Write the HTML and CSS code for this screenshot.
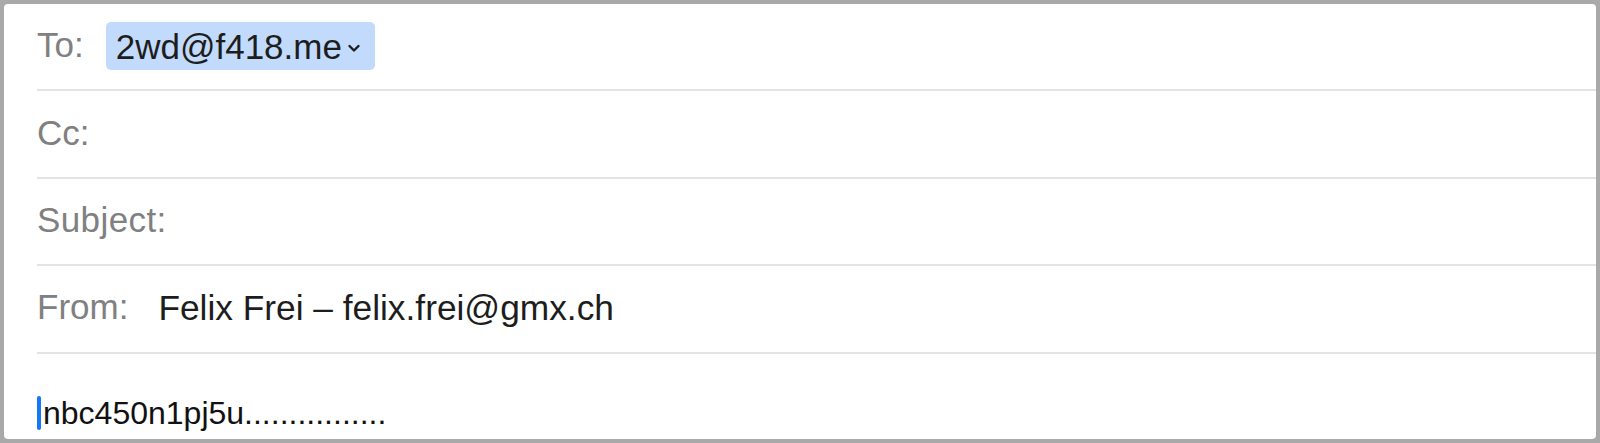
FILE: index.html
```html
<!DOCTYPE html>
<html>
<head>
<meta charset="utf-8">
<link rel="stylesheet" href="styles.css">
</head>
<body>
<div class="window">
  <div class="row row-to">
    <span class="label">To:</span>
    <span class="chip">2wd@f418.me<svg class="chev" width="14" height="10" viewBox="0 0 14 10"><path d="M2.5 3 L7 7.5 L11.5 3" fill="none" stroke="#1d1d1d" stroke-width="2.4" stroke-linecap="round" stroke-linejoin="round"/></svg></span>
  </div>
  <div class="row">
    <span class="label">Cc:</span>
  </div>
  <div class="row">
    <span class="label subject">Subject:</span>
  </div>
  <div class="row row-from">
    <span class="label">From:</span>
    <span class="value">Felix Frei – felix.frei@gmx.ch</span>
  </div>
  <div class="body">
    <span class="cursor"></span><span class="text">nbc450n1pj5u................</span>
  </div>
</div>
</body>
</html>
```

FILE: styles.css
```css
html, body {
  margin: 0;
  padding: 0;
}
body {
  background: #a9a9a9;
  width: 1600px;
  height: 443px;
  padding: 4px;
  box-sizing: border-box;
  font-family: "Liberation Sans", Arial, Helvetica, sans-serif;
}
.window {
  background: #ffffff;
  height: 435px;
  border-radius: 4px;
  padding-left: 33px;
  box-sizing: border-box;
  display: flex;
  flex-direction: column;
  overflow: hidden;
}
.row {
  height: 85.4px;
  border-bottom: 2px solid #e4e4e4;
  display: flex;
  align-items: center;
  font-size: 35px;
  flex-shrink: 0;
}
.label {
  color: #808080;
  margin-top: -2px;
}
.subject {
  letter-spacing: 0.4px;
}
.chip {
  margin-left: 22px;
  background: #c2dafc;
  border-radius: 5px;
  height: 48px;
  padding: 0 14px 0 10px;
  display: flex;
  align-items: center;
  color: #1d1d1d;
  box-sizing: border-box;
  font-size: 35px;
}
.row-to {
  align-items: flex-start;
}
.row-to .label {
  margin-top: 21px;
}
.row-to .chip {
  margin-top: 18px;
  padding-top: 1px;
}
.chev {
  margin-left: 5px;
  margin-top: 2px;
}
.row-from .label {
  margin-top: -3px;
}
.value {
  margin-left: 30px;
  color: #1d1d1d;
  font-size: 35.3px;
  margin-top: -2px;
}
.body {
  flex: 1;
  display: flex;
  align-items: flex-end;
  padding-bottom: 9px;
  font-size: 32px;
  color: #111;
}
.cursor {
  display: inline-block;
  width: 4px;
  height: 34px;
  background: #1477f8;
  border-radius: 2px;
  margin-right: 2px;
  align-self: flex-end;
}
.text {
  line-height: 34px;
}
```
